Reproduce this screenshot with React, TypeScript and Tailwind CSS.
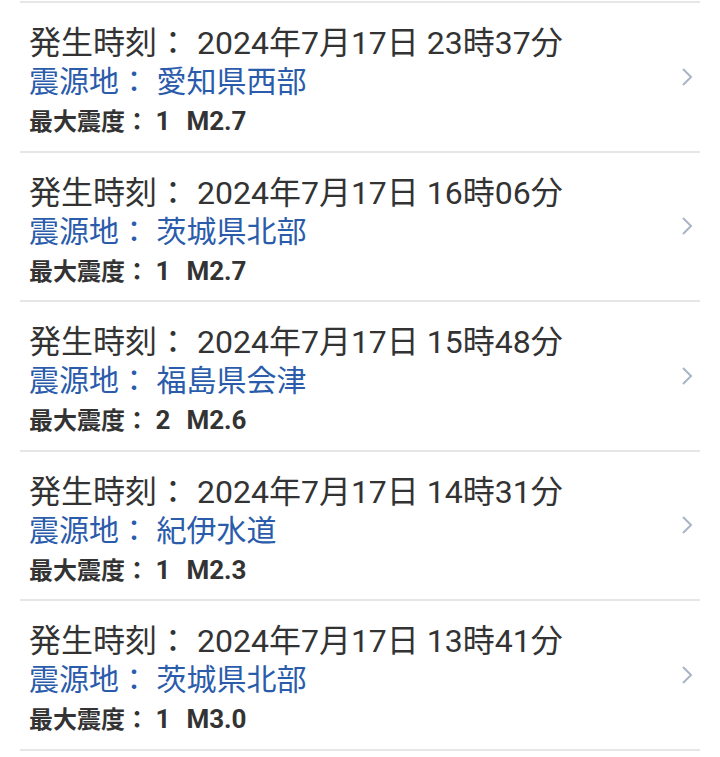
import React from "react";

const items = [
  { time: "2024年7月17日 23時37分", place: "愛知県西部", shindo: "1", mag: "M2.7" },
  { time: "2024年7月17日 16時06分", place: "茨城県北部", shindo: "1", mag: "M2.7" },
  { time: "2024年7月17日 15時48分", place: "福島県会津", shindo: "2", mag: "M2.6" },
  { time: "2024年7月17日 14時31分", place: "紀伊水道", shindo: "1", mag: "M2.3" },
  { time: "2024年7月17日 13時41分", place: "茨城県北部", shindo: "1", mag: "M3.0" },
];

function Chevron() {
  return (
    <svg width="14" height="20" viewBox="0 0 14 20" fill="none">
      <path d="M3 2 L11 10 L3 18" stroke="#a9b5c4" strokeWidth="2" />
    </svg>
  );
}

export default function App() {
  return (
    <div
      className="w-[720px] h-[757px] bg-white px-[20px] overflow-hidden"
      style={{ fontFamily: "Roboto, 'Noto Sans CJK JP', sans-serif" }}
    >
      <div className="pt-px">
        <div className="h-[2px] bg-[#e6e6e6]" />
        {items.map((it, i) => (
          <div key={i} className="h-[149.5px] border-b-2 border-[#e6e6e6] flex items-center">
            <div className="flex-1 pl-[9px] pt-[15px]">
              <div className="text-[32px] leading-[40px] text-[#333333]">発生時刻： {it.time}</div>
              <div className="text-[30px] leading-[38px] text-[#2a5cab]">震源地： {it.place}</div>
              <div className="leading-[40px] font-bold text-[#333333]">
                <span className="text-[24px]">最大震度：</span>
                <span className="text-[26px]"> {it.shindo}</span>
                <span className="text-[26px] ml-[16px]">{it.mag}</span>
              </div>
            </div>
            <div className="pr-[6px]">
              <Chevron />
            </div>
          </div>
        ))}
      </div>
    </div>
  );
}
